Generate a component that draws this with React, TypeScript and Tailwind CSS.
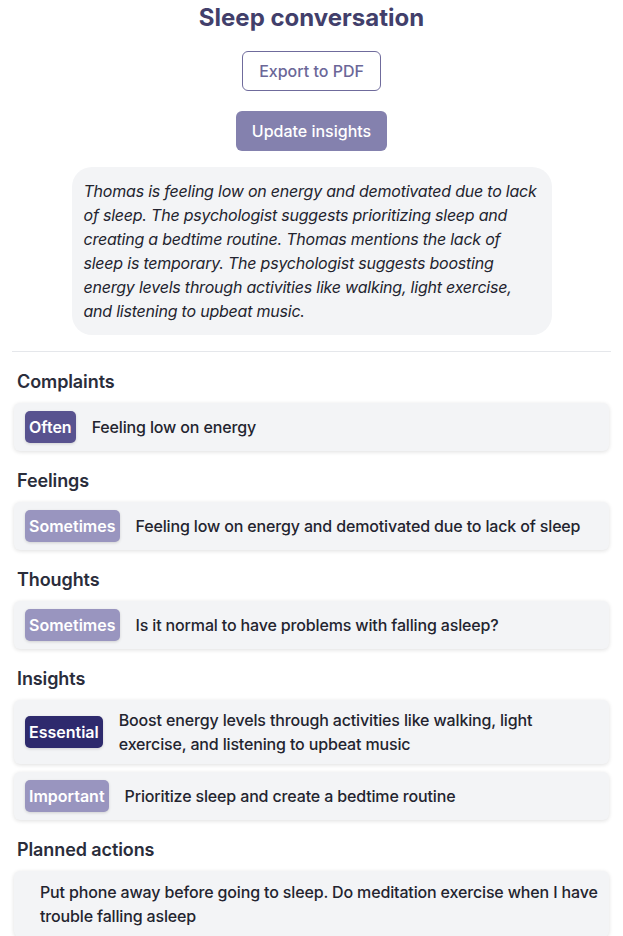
import React from "react";

type Item = { badge?: string; color?: string; text: string };

const sections: { title: string; items: Item[] }[] = [
  { title: "Complaints", items: [{ badge: "Often", color: "bg-[#58528f]", text: "Feeling low on energy" }] },
  {
    title: "Feelings",
    items: [{ badge: "Sometimes", color: "bg-[#9995bf]", text: "Feeling low on energy and demotivated due to lack of sleep" }],
  },
  {
    title: "Thoughts",
    items: [{ badge: "Sometimes", color: "bg-[#9995bf]", text: "Is it normal to have problems with falling asleep?" }],
  },
  {
    title: "Insights",
    items: [
      {
        badge: "Essential",
        color: "bg-[#2e2a6d]",
        text: "Boost energy levels through activities like walking, light exercise, and listening to upbeat music",
      },
      { badge: "Important", color: "bg-[#9995bf]", text: "Prioritize sleep and create a bedtime routine" },
    ],
  },
  {
    title: "Planned actions",
    items: [{ text: "Put phone away before going to sleep. Do meditation exercise when I have trouble falling asleep" }],
  },
];

export default function App() {
  return (
    <div className="min-h-screen bg-white px-3 text-[#23242f]" style={{ fontFamily: "Inter, 'Noto Sans', sans-serif" }}>
      <h1 className="pt-0.5 text-center text-2xl leading-8 font-bold text-[#423f6b]">Sleep conversation</h1>
      <div className="mt-[17px] flex justify-center">
        <button className="rounded-md border border-[#6f6b9c] bg-white px-4 py-[7px] text-base leading-6 font-medium text-[#6b6798]">
          Export to PDF
        </button>
      </div>
      <div className="mt-[20px] flex justify-center">
        <button className="rounded-md bg-[#8481ae] px-4 py-2 text-base leading-6 font-medium text-white">
          Update insights
        </button>
      </div>
      <div className="mx-auto mt-4 w-[480px] rounded-[20px] bg-[#f3f4f6] px-3 py-3 text-base leading-6 tracking-[-0.22px] text-[#23242f] italic">
        Thomas is feeling low on energy and demotivated due to lack of sleep. The psychologist suggests prioritizing sleep
        and creating a bedtime routine. Thomas mentions the lack of sleep is temporary. The psychologist suggests boosting
        energy levels through activities like walking, light exercise, and listening to upbeat music.
      </div>
      <div className="mt-4 h-px bg-[#e5e7eb]" />
      <div className="flex flex-col pt-4">
        {sections.map((s, si) => (
          <div key={s.title} className={si > 0 ? "mt-4" : ""}>
            <h2 className="px-[5px] text-lg leading-7 font-semibold tracking-[-0.1px] text-[#2a2d3b]">{s.title}</h2>
            <div className="mt-[7px] flex flex-col gap-2">
              {s.items.map((it, i) => (
                <div
                  key={i}
                  className={
                    "mx-0.5 flex items-center gap-4 rounded-md bg-[#f3f4f6] shadow-[0_1px_4px_rgba(0,0,0,0.13)] " +
                    (it.badge ? "py-2 pr-[11px] pl-[11px]" : "py-[9px] pr-[11px] pl-[26px]")
                  }
                >
                  {it.badge && (
                    <span
                      className={
                        "shrink-0 rounded-[5px] px-1 py-1 text-base leading-6 font-semibold text-white shadow-[0_1px_3px_rgba(0,0,0,0.15)] " +
                        it.color
                      }
                    >
                      {it.badge}
                    </span>
                  )}
                  <span className="text-base leading-6 font-medium tracking-[-0.15px] text-[#23242f]">{it.text}</span>
                </div>
              ))}
            </div>
          </div>
        ))}
      </div>
    </div>
  );
}
